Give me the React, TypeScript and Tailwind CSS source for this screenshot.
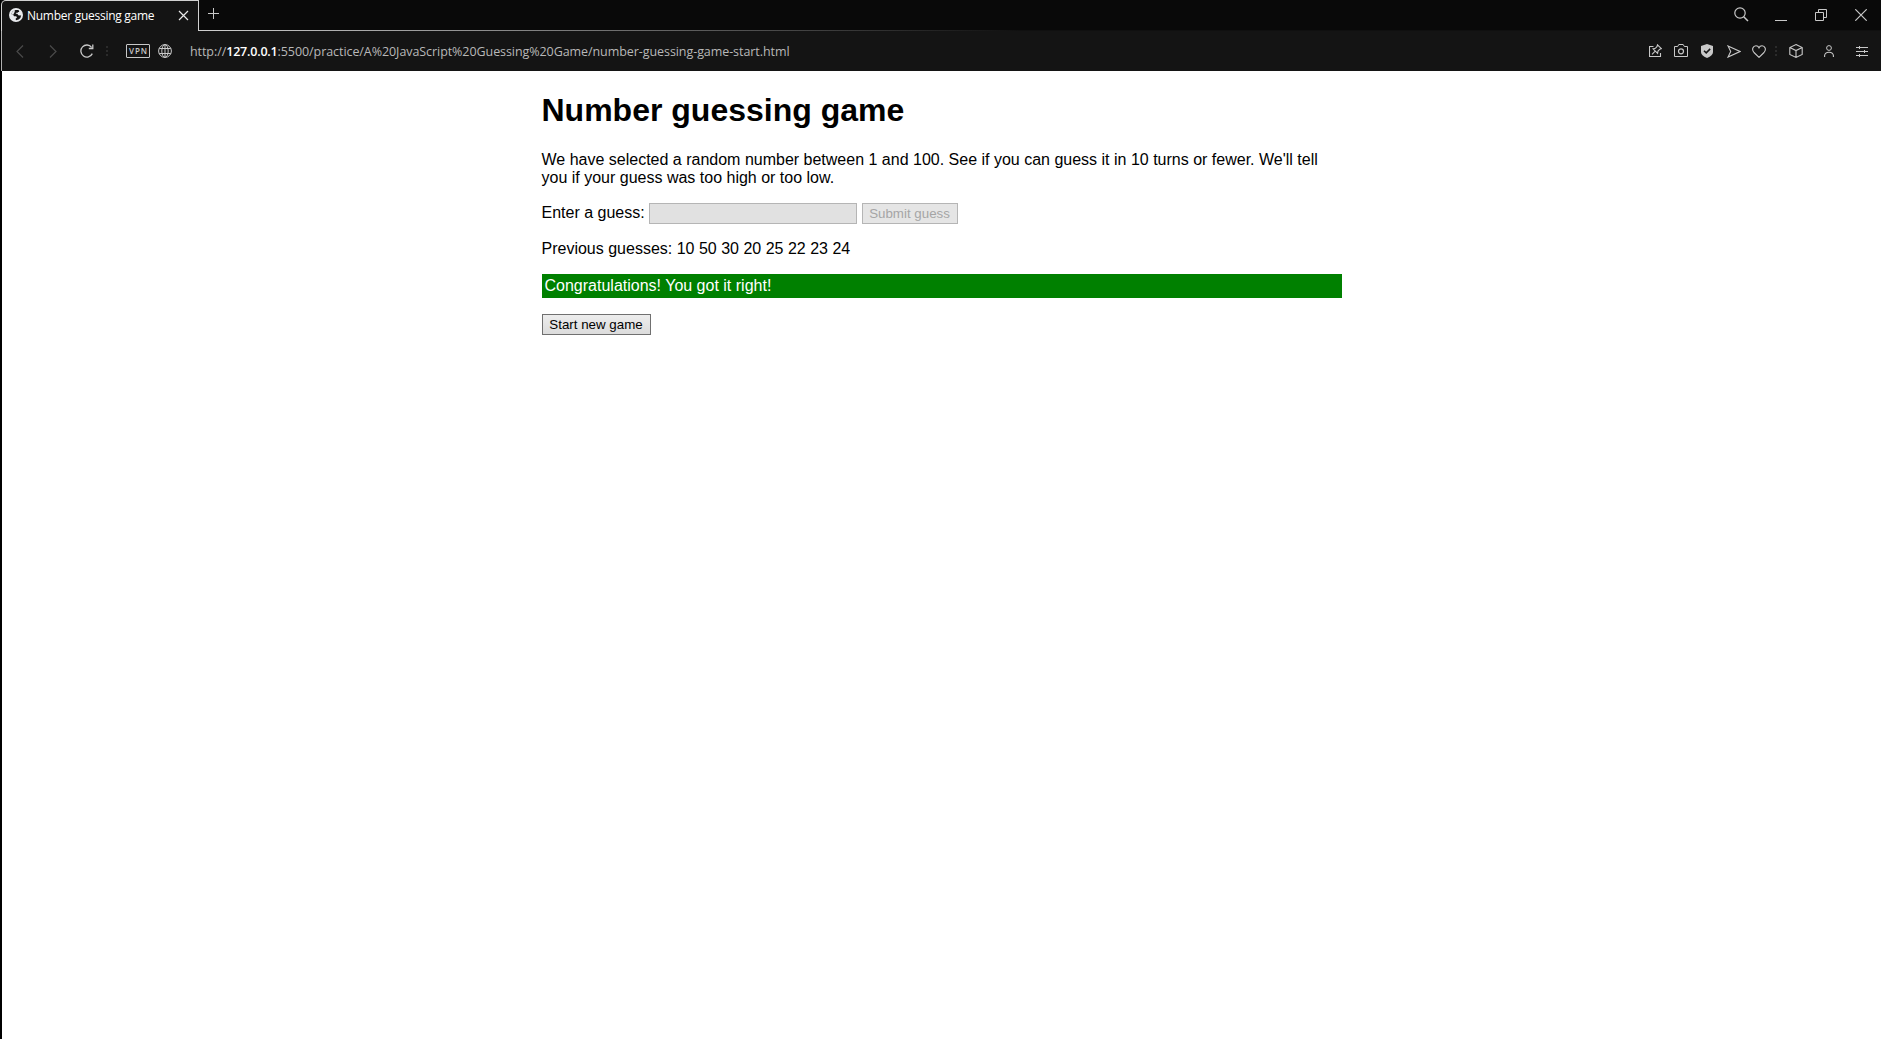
import React from "react";

const stroke = { fill: "none", stroke: "#c8c8c8", strokeWidth: 1.2 };

function Svg({ w, h, className = "", children }: { w: number; h: number; className?: string; children: React.ReactNode }) {
  return (
    <svg width={w} height={h} viewBox={`0 0 ${w} ${h}`} className={`block shrink-0 ${className}`} {...stroke}>
      {children}
    </svg>
  );
}

const Dots = ({ className = "" }: { className?: string }) => (
  <div className={`flex w-[2px] shrink-0 flex-col gap-[2px] ${className}`}>
    <i className="h-[2px] bg-[#2b2b2b]" />
    <i className="h-[2px] bg-[#2b2b2b]" />
    <i className="h-[2px] bg-[#2b2b2b]" />
  </div>
);

function TabBar() {
  return (
    <div className="flex h-[31px] bg-[#090909]">
      <div className="flex h-[31px] w-[198px] shrink-0 items-center rounded-tl-[5px] border-t border-r border-l border-[#d0d0d0] bg-[#141414] pb-[2px] pl-[7px]">
        <Svg w={14} h={14}>
          <circle cx="7" cy="7" r="7" fill="#e8eaed" stroke="none" />
          <path d="M6.2 2 H9.4 L10.4 3.4 L8.8 4.8 H7.4 L6.6 5.8 H8.4 L9.6 7.2 H12.2 A5.2 5.2 0 0 1 9.6 11.4 L7 12.2 L6.6 10.8 L8 9.6 L7.2 8.2 H5 L4.2 6.8 L2.2 6 A5.4 5.4 0 0 1 6.2 2Z" fill="#141414" stroke="none" />
          <path d="M8.4 5.8 L9.6 7.2 H12.3 L11.9 4.6 L10.4 3.4 L8.8 4.8Z M2.2 6 A5.4 5.4 0 0 1 6.2 2 L5.4 4.4 L4.2 6.8Z" fill="#e8eaed" stroke="none" />
        </Svg>
        <span className="mt-[2px] ml-[4px] w-[129px] font-['Open_Sans',sans-serif] text-[12px] tracking-[-0.27px] whitespace-nowrap text-white">
          Number guessing game
        </span>
        <Svg w={11} h={11} className="ml-[22px]">
          <path d="M1 1 L10 10 M10 1 L1 10" stroke="#e8e8e8" />
        </Svg>
      </div>
      <div className="flex flex-1 border-b border-[#6f6f6f] [border-image:linear-gradient(to_right,#d0d0d0,#101010_820px)_1]">
        <Svg w={11} h={11} className="mt-[8px] ml-[9px]">
          <path d="M5.5 0 V11 M0 5.5 H11" strokeWidth="1" />
        </Svg>
        <div className="ml-auto flex">
          <Svg w={15} h={15} className="mt-[7px]">
            <circle cx="6" cy="6" r="5.2" />
            <path d="M9.7 9.7 L14 14" strokeWidth="1.5" />
          </Svg>
          <Svg w={12} h={1} className="mt-[20px] ml-[26px]">
            <path d="M0 .5 H12" strokeWidth="1" />
          </Svg>
          <Svg w={12} h={12} className="mt-[9px] ml-[28px]">
            <path d="M.5 3.5 H8.5 V11.5 H.5Z M3.5 3.5 V.5 H11.5 V8.5 H8.5" strokeWidth="1" />
          </Svg>
          <Svg w={12} h={12} className="mt-[9px] mr-[14px] ml-[28px]">
            <path d="M.3 .3 L11.7 11.7 M11.7 .3 L.3 11.7" />
          </Svg>
        </div>
      </div>
    </div>
  );
}

function AddressBar() {
  return (
    <div className="flex h-[40px] items-center border-l border-[#b0b0b0] bg-[#141414] pr-[13px] pl-[14px]">
      <Svg w={8} h={13}><path d="M7 .5 L1 6.5 L7 12.5" stroke="#4a4a4a" /></Svg>
      <Svg w={8} h={13} className="ml-[25px]"><path d="M1 .5 L7 6.5 L1 12.5" stroke="#4a4a4a" /></Svg>
      <Svg w={14} h={14} className="ml-[23px]">
        <path d="M12.3 9.6 A6 6 0 1 1 11.6 3.3 M12.8 .5 V4.5 H8.8" strokeWidth="1.3" />
      </Svg>
      <Dots className="ml-[12px]" />
      <div className="ml-[18px] flex h-[14px] w-[24px] shrink-0 items-center justify-center rounded-[1px] border border-[#c8c8c8]">
        <span className="pl-px font-['Open_Sans',sans-serif] text-[8px] leading-none font-semibold tracking-[1px] text-[#c8c8c8]">VPN</span>
      </div>
      <Svg w={14} h={14} className="ml-[8px]">
        <circle cx="7" cy="7" r="6.4" strokeWidth="1" />
        <ellipse cx="7" cy="7" rx="3.2" ry="6.4" strokeWidth="1" />
        <path d="M7 .5 V13.5 M1.2 4.5 H12.8 M1.2 9.5 H12.8" strokeWidth="1" />
      </Svg>
      <span className="mt-[2px] ml-[18px] font-['Open_Sans',sans-serif] text-[12.5px] tracking-[-0.07px] whitespace-nowrap text-[#b8b8b8]">
        http://<span className="font-semibold tracking-[-0.2px] text-white">127.0.0.1</span>:5500/practice/A%20JavaScript%20Guessing%20Game/number-guessing-game-start.html
      </span>
      <div className="ml-auto flex items-center">
        <Svg w={13} h={14}>
          <path d="M4.5 2.5 H.5 V12.5 H11.5 V9 M8.5 .8 L12.4 4.7 L10.8 5.2 L9 7 L8.6 9.3 L4.1 4.8 L6.4 4.3 L8.1 2.5Z M6.2 7.1 L3 10.3" strokeWidth="1.1" />
        </Svg>
        <Svg w={14} h={14} className="ml-[12px]">
          <path d="M.5 2.5 H3.7 L4.8 .5 H9.2 L10.3 2.5 H13.5 V12.5 H.5Z" strokeWidth="1" />
          <circle cx="7" cy="7.3" r="2.5" />
        </Svg>
        <Svg w={12} h={14} className="ml-[13px]">
          <path d="M6 0 L12 2 V8 Q12 11.5 6 14 Q0 11.5 0 8 V2Z" fill="#c8c8c8" stroke="none" />
          <path d="M3 6.7 L5.2 8.9 L9.2 4.9" stroke="#141414" strokeWidth="1.5" />
        </Svg>
        <Svg w={14} h={13} className="ml-[14px]">
          <path d="M1 .9 L13 6.5 L1 12.1 L3.7 6.5Z" strokeWidth="1.1" />
        </Svg>
        <Svg w={14} h={13} className="ml-[11px]">
          <path d="M7 12.4 L2 7.5 C-.7 4.5 1 .7 4 .7 C5.5 .7 6.5 1.5 7 2.7 C7.5 1.5 8.5 .7 10 .7 C13 .7 14.7 4.5 12 7.5Z" strokeWidth="1.1" />
        </Svg>
        <Dots className="ml-[9px]" />
        <Svg w={14} h={14} className="ml-[12px]">
          <path d="M7 .6 L13.2 3.6 V10.4 L7 13.4 L.8 10.4 V3.6Z M.8 3.6 L7 6.6 L13.2 3.6 M7 6.6 V13.4" strokeWidth="1.1" />
        </Svg>
        <Svg w={10} h={12} className="ml-[21px]">
          <circle cx="5" cy="3" r="2.4" strokeWidth="1" />
          <path d="M.6 12 V10.5 Q1 7.2 5 7.2 Q9 7.2 9.4 10.5 V12" strokeWidth="1.1" />
        </Svg>
        <Svg w={12} h={11} className="ml-[22px]">
          <path d="M0 1.5 H12 M0 5.5 H12 M0 9.5 H12 M3.5 0 V3 M8.5 4 V7 M3.5 8 V11" strokeWidth="1" />
        </Svg>
      </div>
    </div>
  );
}

export default function App() {
  return (
    <div className="flex h-[1039px] w-[1881px] overflow-hidden bg-black font-['Liberation_Sans',Arial,sans-serif] text-[16px] leading-[18px] text-black">
      <div className="w-px shrink-0 bg-black" />
      <div className="flex min-w-0 flex-1 flex-col">
        <TabBar />
        <AddressBar />
        <main className="ml-px flex-1 bg-white pl-[539.5px]">
          <div className="w-[800px]">
            <h1 className="pt-[21px] text-[32px] leading-[37px] font-bold">Number guessing game</h1>
            <p className="mt-[22px]">
              We have selected a random number between 1 and 100. See if you can guess it in 10 turns or fewer. We'll tell
              <br />
              you if your guess was too high or too low.
            </p>
            <form className="mt-[15px] flex h-[22px]" onSubmit={(e) => e.preventDefault()}>
              <label htmlFor="guess" className="mt-[2px] w-[107px] whitespace-nowrap">Enter a guess:</label>
              <input id="guess" disabled className="mt-px h-[21px] w-[208px] border border-[#b5b5b5] bg-[#e1e1e1]" />
              <button disabled className="mt-px ml-[5px] h-[21px] w-[96px] border border-[#b5b5b5] bg-[#e5e5e5] text-[13.333px] leading-[19px] whitespace-nowrap text-[#a5a5a5]">Submit guess</button>
            </form>
            <p className="mt-[16px]">Previous guesses: 10 50 30 20 25 22 23 24</p>
            <p className="mt-[16px] h-[24px] bg-[#008000] p-[3px] text-white">Congratulations! You got it right!</p>
            <button className="mt-[16px] block h-[21px] w-[109px] border border-[#707070] bg-linear-to-b from-[#ededed] to-[#dcdcdc] text-[13.333px] leading-[19px] whitespace-nowrap">Start new game</button>
          </div>
        </main>
      </div>
    </div>
  );
}
